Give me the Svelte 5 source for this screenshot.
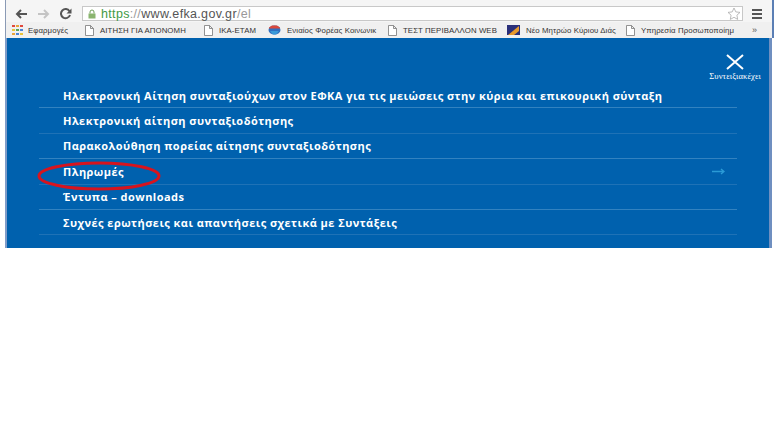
<script>
	const bookmarks = [
		{ label: 'ΑΙΤΗΣΗ ΓΙΑ ΑΠΟΝΟΜΗ', icon: 'page', width: 119 },
		{ label: 'ΙΚΑ-ΕΤΑΜ', icon: 'page', width: 64 },
		{ label: 'Ενιαίος Φορέας Κοινωνικ', icon: 'globe', width: 120 },
		{ label: 'ΤΕΣΤ ΠΕΡΙΒΑΛΛΟΝ WEB', icon: 'page', width: 119 },
		{ label: 'Νέο Μητρώο Κύριου Διάς', icon: 'flag', width: 119 },
		{ label: 'Υπηρεσία Προσωποποίημ', icon: 'page', width: 112 }
	];

	const links = [
		'Ηλεκτρονική Αίτηση συνταξιούχων στον ΕΦΚΑ για τις μειώσεις στην κύρια και επικουρική σύνταξη',
		'Ηλεκτρονική αίτηση συνταξιοδότησης',
		'Παρακολούθηση πορείας αίτησης συνταξιοδότησης',
		'Πληρωμές',
		'Έντυπα – downloads',
		'Συχνές ερωτήσεις και απαντήσεις σχετικά με Συντάξεις'
	];
</script>

<div class="shot">
	<div class="browser">
		<div class="toolbar">
			<svg class="nav" width="13" height="10" viewBox="0 0 13 10"><path d="M12 5H2M6 1 2 5l4 4" fill="none" stroke="#555" stroke-width="2" /></svg>
			<svg class="nav" width="13" height="10" viewBox="0 0 13 10"><path d="M1 5h10M7 1l4 4-4 4" fill="none" stroke="#c4c4c4" stroke-width="2" /></svg>
			<svg class="nav" width="13" height="12" viewBox="0 0 13 12"><path d="M10.500 3.200A4.600 4.600 0 1 0 11 7" fill="none" stroke="#555" stroke-width="2" /><path d="M12.500 .5v5h-5z" fill="#555" /></svg>
			<div class="omnibox">
				<svg width="10" height="10" viewBox="0 0 10 10"><path d="M3 4.500V3a2 2 0 0 1 4 0v1.500" fill="none" stroke="#6f9f58" /><rect x="1.500" y="4.500" width="7" height="5" fill="#8ab56f" /></svg>
				<span class="url"><span class="scheme">https</span><span class="sep">://</span>www.efka.gov.gr<span class="sep">/el</span></span>
				<svg class="star" width="14" height="13" viewBox="0 0 14 13"><path d="m7 1 1.800 3.900 4.200.5-3.100 2.800.8 4.200L7 10.300 3.300 12.400l.8-4.200L1 5.400l4.200-.5z" fill="#fff" stroke="#aaa" stroke-width=".8" /></svg>
			</div>
			<div class="menu"><i></i><i></i><i></i></div>
		</div>
		<div class="bookmarks">
			<div class="apps">
				<svg width="11" height="10" viewBox="0 0 11 10">
					<path d="M0 0h3v2H0z" fill="#e0483c" /><path d="M4 0h3v2H4z" fill="#e8a33a" /><path d="M8 0h3v2H8z" fill="#e0483c" />
					<path d="M0 4h3v2H0z" fill="#e8c33a" /><path d="M4 4h3v2H4z" fill="#5aa457" /><path d="M8 4h3v2H8z" fill="#4b84d8" />
					<path d="M0 8h3v2H0z" fill="#e8a33a" /><path d="M4 8h3v2H4z" fill="#4b84d8" /><path d="M8 8h3v2H8z" fill="#e8c33a" />
				</svg>
				<span>Εφαρμογές</span>
			</div>
			{#each bookmarks as b}
				<div class="bookmark" style="width: {b.width}px">
					{#if b.icon === 'page'}
						<svg width="9" height="11" viewBox="0 0 9 11"><path d="M.5.500h5l3 3v7h-8zM5.500.500v3h3" fill="#fff" stroke="#777" stroke-width=".8" /></svg>
					{:else if b.icon === 'globe'}
						<svg width="13" height="10" viewBox="0 0 13 10"><ellipse cx="6.500" cy="5" rx="6" ry="4.500" fill="#2f6fc0" /><path d="M1 3.500h11V2.500L9 .5H4L1 2.500z" fill="#d9483b" /><path d="M2 6h9L8 9.500H5z" fill="#3a9ad9" /></svg>
					{:else}
						<svg width="13" height="10" viewBox="0 0 13 10"><path d="M0 0h13v10H0z" fill="#2a2f7a" /><path d="M1 10 12 1v5l-5 4z" fill="#e89a2c" /></svg>
					{/if}
					<span>{b.label}</span>
				</div>
			{/each}
			<span class="more">»</span>
		</div>
	</div>

	<section class="panel">
		<div class="close">
			<svg width="20" height="16" viewBox="0 0 20 16"><path d="M2 1l16 14M18 1 2 15" fill="none" stroke="#fff" stroke-width="2" /></svg>
			<span>Συντειξιακέχει</span>
		</div>
		<ul>
			{#each links as link, i}
				<li>
					<span>{link}</span>
					{#if i === 3}
						<svg width="13" height="7" viewBox="0 0 13 7"><path d="M0 3.500h12M9 1l3 2.500L9 6" fill="none" stroke="#2a9ad6" stroke-width="1.400" /></svg>
					{/if}
				</li>
			{/each}
		</ul>
		<svg class="circle" width="124" height="32" viewBox="0 0 124 32"><ellipse cx="62" cy="16" rx="60" ry="13" fill="none" stroke="#d7141e" stroke-width="3" /></svg>
	</section>
</div>

<style>
	:global(body) {
		margin: 0;
		background: #fff;
	}

	.shot {
		width: 781px;
		height: 422px;
		overflow: hidden;
		background: #fff;
		font-family: "Liberation Sans", Arial, sans-serif;
	}

	.browser {
		width: 769px;
		margin-left: 5px;
		border-left: 1px solid #8a9ab5;
		border-right: 2px solid #5b7fb5;
		box-sizing: border-box;
		height: 38px;
		background: #f2f2f2;
	}

	.toolbar {
		display: flex;
		align-items: center;
		gap: 9px;
		height: 22px;
		padding: 5px 0 0 9px;
		box-sizing: border-box;
		background: #f5f5f5;
	}

	.omnibox {
		display: flex;
		align-items: center;
		gap: 4px;
		width: 661px;
		height: 15px;
		margin-left: 1px;
		padding-left: 4px;
		box-sizing: border-box;
		background: #fff;
		border: 1px solid #c8c8c8;
	}

	.url {
		font-size: 12.500px;
		letter-spacing: 0.33px;
		color: #555;
	}

	.scheme {
		color: #3f9a45;
	}

	.sep {
		color: #999;
	}

	.star {
		margin-left: auto;
		margin-right: 1px;
	}

	.menu {
		display: flex;
		flex-direction: column;
		gap: 2px;
		width: 10px;
	}

	.menu i {
		height: 2px;
		background: #555;
	}

	.bookmarks {
		display: flex;
		align-items: center;
		height: 16px;
		padding-left: 6px;
		font-size: 7.800px;
		letter-spacing: 0.1px;
		color: #333;
		background: #f0f0f0;
	}

	.apps {
		display: flex;
		align-items: center;
		gap: 5px;
		width: 73px;
		flex: none;
	}

	.bookmark {
		display: flex;
		align-items: center;
		gap: 6px;
		flex: none;
		overflow: hidden;
		white-space: nowrap;
	}

	.bookmark svg {
		flex: none;
	}

	.more {
		margin-left: 14px;
		font-size: 9px;
		color: #555;
	}

	.panel {
		position: relative;
		width: 767px;
		height: 210px;
		margin-left: 5px;
		padding: 45px 32px 0 32px;
		box-sizing: border-box;
		background: #0061ae;
		border-left: 2px solid #7f9cc8;
		border-right: 3px solid #6f8fc0;
	}

	.close {
		position: absolute;
		top: 16px;
		right: 8px;
		display: flex;
		flex-direction: column;
		align-items: center;
		gap: 1px;
		color: #fff;
		font-family: "Liberation Serif", serif;
		font-size: 8.500px;
		letter-spacing: 0.1px;
	}

	ul {
		list-style: none;
		margin: 0;
		padding: 0;
	}

	li {
		display: flex;
		align-items: center;
		justify-content: space-between;
		height: 25.400px;
		padding: 0 12px 0 24px;
		box-sizing: border-box;
		border-bottom: 1px solid #1f72b6;
		color: #fff;
		font-family: "Open Sans", sans-serif;
		font-weight: 700;
		font-size: 11px;
		letter-spacing: 0.46px;
		white-space: nowrap;
	}

	li:nth-child(odd) {
		border-bottom-color: #3282c0;
	}

	.circle {
		position: absolute;
		left: 30px;
		top: 122px;
	}
</style>
